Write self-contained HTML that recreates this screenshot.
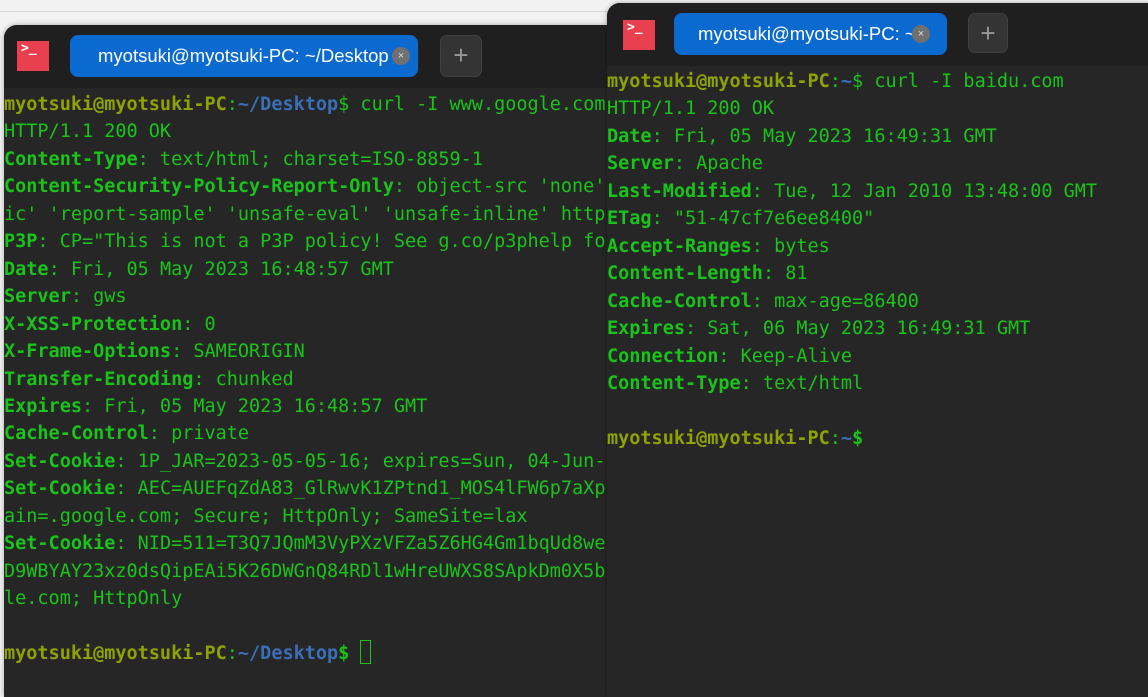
<!DOCTYPE html>
<html><head><style>
body{margin:0;width:1148px;height:697px;overflow:hidden;background:#f2f2f2;position:relative;font-family:"DejaVu Sans Mono",monospace}
.topline{position:absolute;left:0;top:11px;width:1148px;height:1px;background:#d8d8d8}
.win{position:absolute;background:#262626;border-radius:13px 13px 0 0;overflow:hidden;box-shadow:0 0 6px rgba(0,0,0,.3)}
.bar{position:absolute;left:0;top:0;right:0;background:#1f1f1f}
.ico{position:absolute;width:32px;height:30px;background:#e8404e;color:#fff;font:bold 13px "DejaVu Sans Mono",monospace;line-height:16px;padding-left:4px;box-sizing:border-box}
.tab{position:absolute;height:42px;background:#0a6ad0;border-radius:8px;color:#fff;font:18.5px "Liberation Sans",sans-serif;line-height:42px;box-sizing:border-box;white-space:nowrap}
.x{position:absolute;width:18px;height:18px;border-radius:50%;background:#707070;color:#ddd;font:11px "Liberation Sans",sans-serif;text-align:center;line-height:18px;top:12px}
.plus{position:absolute;width:40px;height:40px;border-radius:7px;background:#343434;border:1px solid #404040;color:#999;font:26px "Liberation Sans",sans-serif;text-align:center;line-height:38px;box-sizing:border-box}
pre{position:absolute;margin:0;font:18.5px "DejaVu Sans Mono",monospace;line-height:27.45px;color:#19c419;white-space:pre}
b{font-weight:bold;color:#19c419}
.u{color:#8fa300;font-weight:bold}
.p{color:#3a6fb8;font-weight:bold}
.g{color:#19c419;font-weight:bold}
.cur{display:inline-block;width:9px;height:22px;border:1.5px solid #19c419;vertical-align:-5px}
</style></head><body>
<div class="topline"></div>
<div class="win" style="left:4px;top:25px;width:640px;height:672px">
 <div class="bar" style="height:63px"></div>
 <div class="ico" style="left:13px;top:16px">&gt;_</div>
 <div class="tab" style="left:66px;top:10px;width:348px;padding-left:28px">myotsuki@myotsuki-PC: ~/Desktop<div class="x" style="left:322px">×</div></div>
 <div class="plus" style="left:436px;top:10px;width:42px;height:42px">+</div>
 <pre style="left:0;top:66px"><span class="u">myotsuki@myotsuki-PC</span>:<span class="p">~/Desktop</span>$ curl -I www.google.com
HTTP/1.1 200 OK
<b>Content-Type</b>: text/html; charset=ISO-8859-1
<b>Content-Security-Policy-Report-Only</b>: object-src 'none'
ic' 'report-sample' 'unsafe-eval' 'unsafe-inline' https
<b>P3P</b>: CP="This is not a P3P policy! See g.co/p3phelp for
<b>Date</b>: Fri, 05 May 2023 16:48:57 GMT
<b>Server</b>: gws
<b>X-XSS-Protection</b>: 0
<b>X-Frame-Options</b>: SAMEORIGIN
<b>Transfer-Encoding</b>: chunked
<b>Expires</b>: Fri, 05 May 2023 16:48:57 GMT
<b>Cache-Control</b>: private
<b>Set-Cookie</b>: 1P_JAR=2023-05-05-16; expires=Sun, 04-Jun-
<b>Set-Cookie</b>: AEC=AUEFqZdA83_GlRwvK1ZPtnd1_MOS4lFW6p7aXp
ain=.google.com; Secure; HttpOnly; SameSite=lax
<b>Set-Cookie</b>: NID=511=T3Q7JQmM3VyPXzVFZa5Z6HG4Gm1bqUd8we
D9WBYAY23xz0dsQipEAi5K26DWGnQ84RDl1wHreUWXS8SApkDm0X5b
le.com; HttpOnly

<span class="u">myotsuki@myotsuki-PC</span>:<span class="p">~/Desktop</span><span class="g">$</span> <span class="cur"></span></pre>
</div>
<div class="win" style="left:607px;top:3px;width:560px;height:694px">
 <div class="bar" style="height:63px"></div>
 <div class="ico" style="left:16px;top:17px">&gt;_</div>
 <div class="tab" style="left:67px;top:10px;width:273px;padding-left:24px">myotsuki@myotsuki-PC: ~<div class="x" style="left:238px">×</div></div>
 <div class="plus" style="left:361px;top:10px">+</div>
 <pre style="left:0;top:65px"><span class="u">myotsuki@myotsuki-PC</span>:<span class="p">~</span>$ curl -I baidu.com
HTTP/1.1 200 OK
<b>Date</b>: Fri, 05 May 2023 16:49:31 GMT
<b>Server</b>: Apache
<b>Last-Modified</b>: Tue, 12 Jan 2010 13:48:00 GMT
<b>ETag</b>: "51-47cf7e6ee8400"
<b>Accept-Ranges</b>: bytes
<b>Content-Length</b>: 81
<b>Cache-Control</b>: max-age=86400
<b>Expires</b>: Sat, 06 May 2023 16:49:31 GMT
<b>Connection</b>: Keep-Alive
<b>Content-Type</b>: text/html

<span class="u">myotsuki@myotsuki-PC</span>:<span class="p">~</span><span class="g">$</span></pre>
</div>
</body></html>
